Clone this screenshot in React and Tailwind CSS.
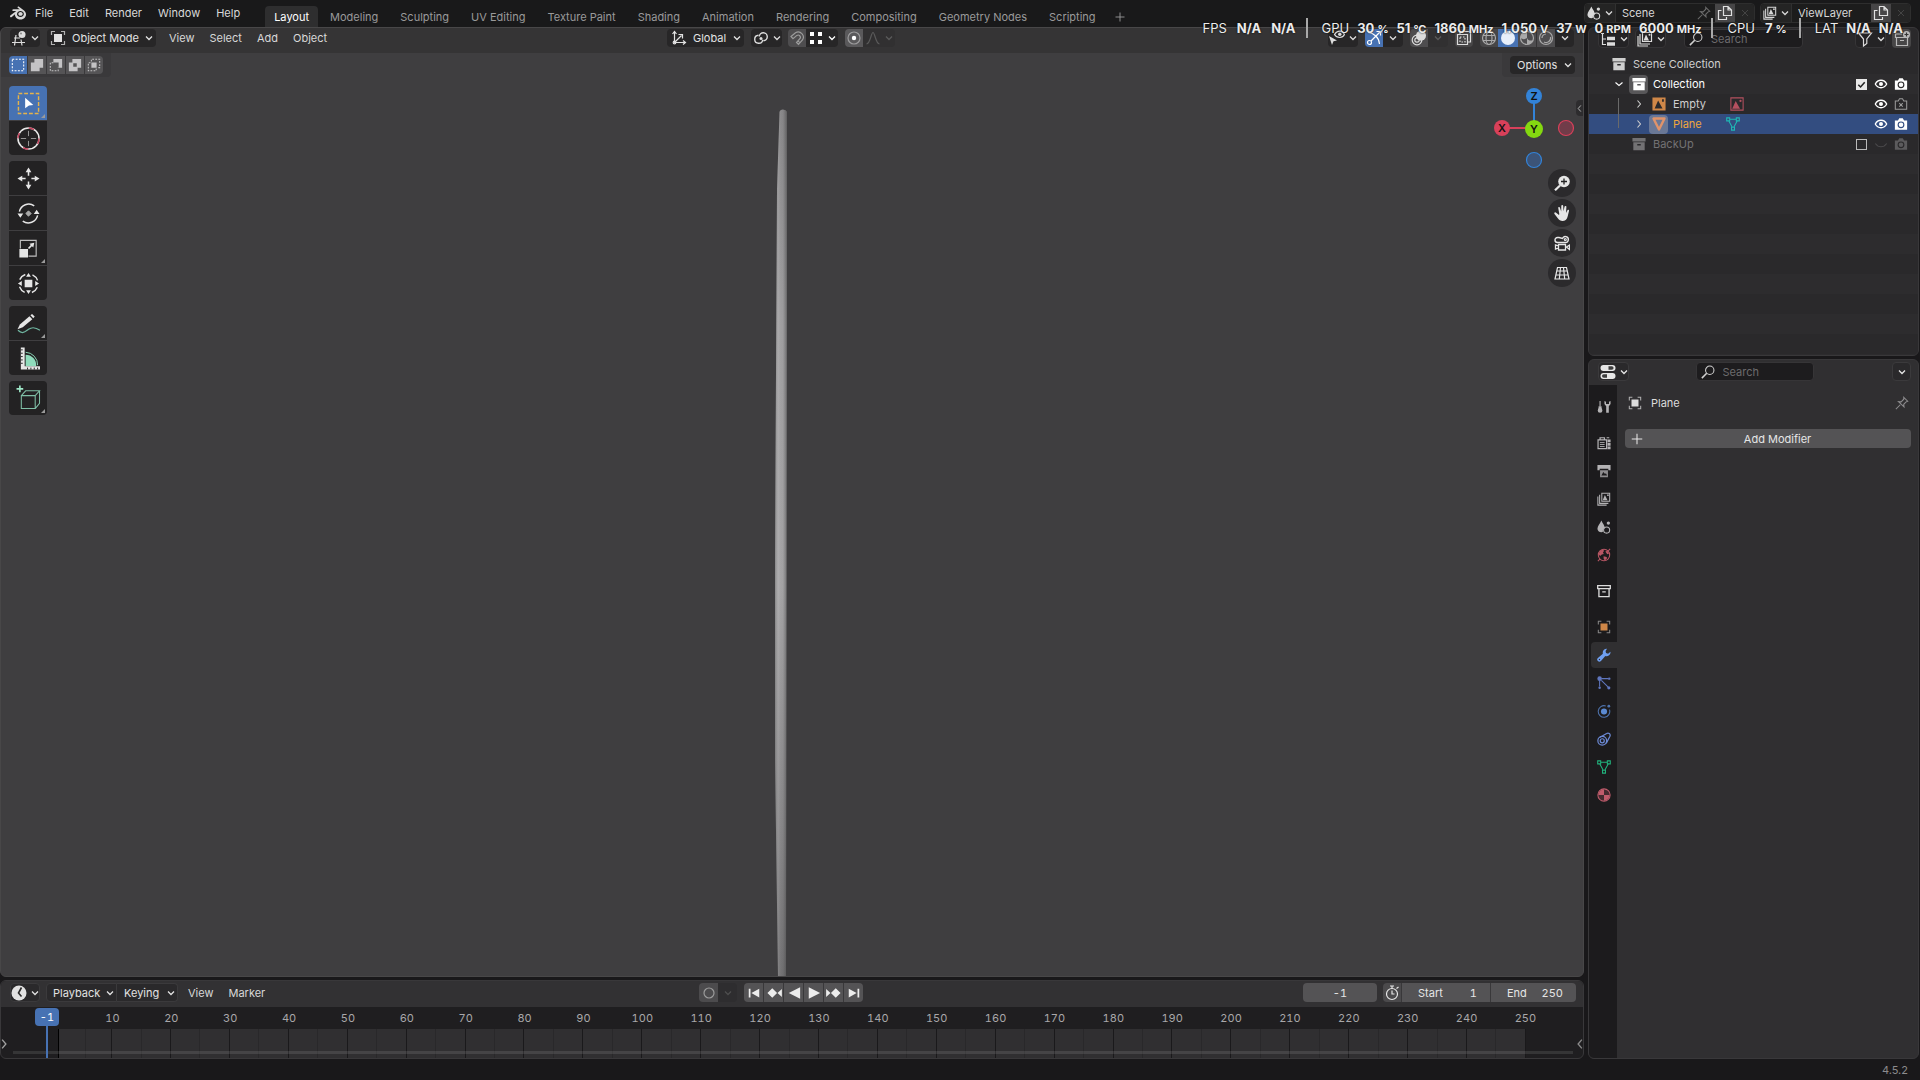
import React from "react";
import { SiBlender } from "react-icons/si";

/* ---------- icons ---------- */

function Icon({ children, className = "size-4", box = 16 }) {
  return (
    <svg
      viewBox={`0 0 ${box} ${box}`}
      className={`${className} shrink-0`}
      fill="none"
      stroke="currentColor"
      strokeWidth="1.2"
      aria-hidden="true"
    >
      {children}
    </svg>
  );
}

const Chevron = ({ className = "" }) => (
  <svg viewBox="0 0 8 8" className={`size-2 shrink-0 ${className}`} fill="none" stroke="currentColor" strokeWidth="1.3" aria-hidden="true">
    <path d="M1 2.500l3 3 3-3" />
  </svg>
);
const ChevronRight = ({ className = "size-2" }) => (
  <svg viewBox="0 0 8 8" className={`${className} shrink-0`} fill="none" stroke="currentColor" strokeWidth="1.1" aria-hidden="true">
    <path d="M2.500 0.500l3 3.500-3 3.500" />
  </svg>
);
const ChevronLeft = ({ className = "size-2" }) => (
  <svg viewBox="0 0 8 8" className={`${className} shrink-0`} fill="none" stroke="currentColor" strokeWidth="1.1" aria-hidden="true">
    <path d="M5.500 0.500l-3 3.500 3 3.500" />
  </svg>
);

const View3dIcon = () => (
  <Icon>
    <path d="M3 8h6M1 12.500h13M5 5L3.500 15.500M10 9.500l1 6" />
    <circle cx="11" cy="4.500" r="3.500" fill="currentColor" stroke="none" />
    <circle cx="10" cy="3.500" r="1" fill="#888" stroke="none" />
  </Icon>
);
const ObjectIcon = ({ className, fill = "currentColor" }) => (
  <Icon className={className}>
    <rect x="4" y="4" width="8" height="8" fill={fill} stroke="none" />
    <path d="M1.500 5V1.500H5M11 1.500h3.500V5M14.500 11v3.500H11M5 14.500H1.500V11" opacity=".75" />
  </Icon>
);
const AxesIcon = () => (
  <Icon>
    <path d="M3.500 2v10.500H14M3.500 12.500l7-7M1.500 4l2-2.500 2 2.500M12 10.500l2.500 2-2.500 2M7.500 4.500h4v4" />
    <circle cx="3.500" cy="12.500" r="1.300" />
  </Icon>
);
const PivotIcon = () => (
  <Icon>
    <circle cx="8" cy="8.500" r="1.500" fill="currentColor" stroke="none" />
    <path d="M6.300 6.500a4 4 0 1 1 4.200 4.300M9.700 9.700a4 4 0 1 1-4.200-4.400" strokeWidth="1.400" />
  </Icon>
);
const MagnetIcon = () => (
  <Icon>
    <path d="M2 6.500l4.500-3.800a5.200 5.200 0 0 1 7 7.300L9.500 14.500 7.500 12.500l3.600-4a2.300 2.300 0 0 0-3.200-3.100L4 8.700zM9 10.800l2 2" />
  </Icon>
);
const SnapDotsIcon = () => (
  <Icon>
    <path d="M2 2h4v4H2zM10 2h4v4h-4zM2 10h4v4H2zM10 10h4v4h-4z" fill="currentColor" stroke="none" />
  </Icon>
);
const ProportionalIcon = () => (
  <Icon>
    <circle cx="8" cy="8" r="6" opacity=".4" />
    <circle cx="8" cy="8" r="2.200" fill="currentColor" stroke="none" />
  </Icon>
);
const FalloffIcon = () => (
  <Icon>
    <path d="M1.500 14C5.500 13.500 6 2.500 8 2.500S10.500 13.500 14.500 14" />
  </Icon>
);
const VisibilityIcon = () => (
  <Icon>
    <path d="M5.500 4.500C7 2 9 1.200 10.800 1.200S14.500 2.500 15.500 4.500C14.500 6.500 12.600 7.500 10.800 7.500S7 7 5.500 4.500z" />
    <circle cx="10.800" cy="4.300" r="1.700" fill="currentColor" stroke="none" />
    <path d="M0 6l8 4.500-3.500.8L3 15z" fill="currentColor" stroke="none" />
  </Icon>
);
const GizmoIcon = () => (
  <Icon>
    <path d="M2 2.500c6 .5 11 5 11.500 11.500M5 11L14 2M10.500 1.500H14.500V5.500" />
    <circle cx="3.500" cy="12.500" r="2" />
  </Icon>
);
const OverlayIcon = () => (
  <Icon>
    <circle cx="10" cy="5.800" r="5" fill="currentColor" stroke="none" />
    <circle cx="6" cy="10" r="4.800" />
    <circle cx="6" cy="10" r="2.200" />
  </Icon>
);
const XrayIcon = () => (
  <Icon>
    <path d="M4 4V1.500h10.500V12H12" />
    <path d="M1.500 4.500h10v10h-10z" />
    <path d="M4 7h5v5H4z" strokeDasharray="1.500 1.500" />
  </Icon>
);
const WireIcon = () => (
  <Icon>
    <circle cx="8" cy="8" r="6.500" />
    <ellipse cx="8" cy="8" rx="3" ry="6.500" />
    <path d="M2 5.500h12M2 10.500h12" />
  </Icon>
);
const SolidIcon = () => (
  <Icon>
    <circle cx="8" cy="8" r="7" fill="currentColor" stroke="none" />
  </Icon>
);
const MatPreviewIcon = () => (
  <Icon>
    <circle cx="8" cy="8" r="6.500" />
    <path d="M8 8V1.500A6.500 6.500 0 0 0 1.500 8c2 1.500 4.500 1.500 6.500 0zM8 8c1 2.500 3.500 3 6 2.200A6.500 6.500 0 0 1 8 14.500z" fill="currentColor" stroke="none" />
  </Icon>
);
const RenderedIcon = () => (
  <Icon>
    <circle cx="8" cy="8" r="6.500" />
    <path d="M4 8a4 4 0 0 1 4-4M12.500 7A4.500 4.500 0 0 1 6 12" />
  </Icon>
);
const SceneIcon = ({ className }) => (
  <Icon className={className}>
    <path d="M5 0.500C6.500 4 9 6.500 9 9.500c-2 .5-2.500 2-2.300 4.300C3 14.500.500 12.500.500 10 .500 7 3.500 4 5 .5z" fill="currentColor" stroke="none" />
    <circle cx="11" cy="11.500" r="3.500" />
    <circle cx="13" cy="3.500" r="1.900" fill="currentColor" stroke="none" />
  </Icon>
);
const LayersIcon = ({ className }) => (
  <Icon className={className}>
    <path d="M1 5v10h10M3 3v10h10" />
    <path d="M5.500 1.500h9v9h-9z" />
    <path d="M6.500 9.500l2.500-6 3 6z" fill="currentColor" stroke="none" />
    <circle cx="12.500" cy="3.700" r="1" fill="currentColor" stroke="none" />
  </Icon>
);
const PinIcon = ({ className }) => (
  <Icon className={className}>
    <path d="M1 15l5-5M10 1.500l4.500 4.500-1.500.5-3 3 .3 3L4 6.500l3 .2 3-3z" />
  </Icon>
);
const CopyIcon = () => (
  <Icon>
    <path d="M6.500 1.500h4.500l3.500 3.500v5.500h-8zM11 1.500V5h3.500" />
    <path d="M4.500 5.500h-3v9h8v-2.500" />
  </Icon>
);
const CloseIcon = () => (
  <Icon className="size-3">
    <path d="M4 4l8 8M12 4l-8 8" />
  </Icon>
);
const OutlinerIcon = () => (
  <Icon>
    <path d="M1 2.500h3M2.500 2.500v11H6M2.500 8H6" />
    <path d="M7 5.800h8v3.400H7zM7 11.300h8v3.400H7z" fill="currentColor" stroke="none" />
  </Icon>
);
const SearchIcon = () => (
  <Icon className="size-3.5">
    <circle cx="10" cy="6" r="4.800" />
    <path d="M6.500 9.500L1 15" strokeWidth="1.800" />
  </Icon>
);
const FilterIcon = () => (
  <Icon>
    <path d="M1.500 2h13L9.800 8v4.500L6.500 15V8z" />
  </Icon>
);
const NewCollectionIcon = () => (
  <Icon>
    <path d="M8 3H1.500v3.500H14.500M2.500 6.500v8h11v-8M6 9.500h4" />
    <circle cx="12.500" cy="3.500" r="3.500" fill="currentColor" stroke="none" />
    <path d="M12.500 1.500v4M10.500 3.500h4" stroke="#333" />
  </Icon>
);
const CollectionIcon = ({ className = "size-4" }) => (
  <Icon className={className}>
    <path d="M0.500 1h15v4H.500z" fill="currentColor" stroke="none" />
    <path d="M1.500 6h13v9h-13zM6 8v1.700h4V8z" fill="currentColor" fillRule="evenodd" stroke="none" />
  </Icon>
);
const EyeIcon = () => (
  <Icon>
    <path d="M1.500 8C3 5 5.500 3.700 8 3.700S13 5 14.500 8C13 11 10.500 12.300 8 12.300S3 11 1.500 8z" strokeWidth="1.500" />
    <circle cx="8" cy="8" r="2.300" fill="currentColor" stroke="none" />
  </Icon>
);
const EyeClosedIcon = () => (
  <Icon>
    <path d="M1.500 7.500c3.500 5 9.500 5 13 0" />
  </Icon>
);
const CameraIcon = () => (
  <Icon>
    <path d="M1 4h3.500L6 1.500h4L11.500 4H15v10.500H1zM8 5a3.900 3.900 0 1 0 0 7.800A3.900 3.900 0 0 0 8 5z" fill="currentColor" fillRule="evenodd" stroke="none" />
    <circle cx="8" cy="8.900" r="2.600" fill="currentColor" stroke="none" />
  </Icon>
);
const CameraOffIcon = () => (
  <Icon>
    <path d="M1.500 4.500h3.300L6.300 2h3.400l1.500 2.500h3.300V14h-13zM6 7l4 4M10 7l-4 4" />
  </Icon>
);
const EmptyImageIcon = () => (
  <Icon>
    <path d="M0.500 0.500h15v15H.500zM3 13h9L7 4zM11.500 2.500v3h2v-3z" fill="#cf8748" fillRule="evenodd" stroke="none" />
  </Icon>
);
const ImageDataIcon = () => (
  <Icon>
    <path d="M1 1h14v14H1z" stroke="#b4505f" />
    <path d="M2.500 13.500L6.500 4.500l5 9z" fill="#b4505f" stroke="none" />
    <circle cx="12" cy="4.500" r="1.300" fill="#b4505f" stroke="none" />
  </Icon>
);
const MeshObjectIcon = () => (
  <Icon>
    <path d="M2.500 2.500h11L8 13.500z" stroke="#e0936a" strokeWidth="2.400" strokeLinejoin="round" />
  </Icon>
);
const MeshDataIcon = ({ className, color }) => (
  <Icon className={className}>
    <path d="M4.500 2.500h7M3.200 4.500L7 11.500M12.800 4.500L9 11.500M.800 1h3.400v3.400H.800zM11.800 1h3.400v3.400h-3.400zM6.300 11.600h3.400V15H6.300z" stroke={color} />
  </Icon>
);
const PropertiesIcon = () => (
  <Icon>
    <rect x="0.500" y="1" width="15" height="6" rx="3" fill="currentColor" stroke="none" />
    <rect x="0.500" y="9" width="15" height="6" rx="3" fill="currentColor" stroke="none" />
    <path d="M8.500 2.200h3.300a1.800 1.800 0 0 1 0 3.600H8.500zM3.800 10.200H7v3.600H3.800a1.800 1.800 0 0 1 0-3.600z" fill="#2a2a2a" stroke="none" opacity=".9" />
  </Icon>
);
const PlusIcon = ({ className = "size-3.5" }) => (
  <Icon className={className}>
    <path d="M8 2v12M2 8h12" />
  </Icon>
);
const ClockIcon = () => (
  <Icon>
    <circle cx="8" cy="8" r="7.500" fill="currentColor" stroke="none" />
    <path d="M10.500 2.500L7.500 8l3 3.500" stroke="#2a2a2a" strokeWidth="1.600" />
  </Icon>
);
const StopwatchIcon = () => (
  <Icon>
    <circle cx="8" cy="9" r="5.500" />
    <path d="M8 5.500V9h2.500M6 1h4M8 1v2.500M12.500 3.500L14.500 2" />
  </Icon>
);

/* property editor tabs */
const ToolTabIcon = () => (
  <Icon>
    <path d="M3.500 1v6" strokeWidth="1.300" />
    <path d="M1.800 7h3.400v1.500l1 3.500a2.700 2.700 0 0 1-5.400 0l1-3.500z" fill="currentColor" stroke="none" />
    <path d="M8.500 1v3.500l2 2.500v7.500h3V7l2-2.500V1l-1.800 1v2.500h-3.400V2z" fill="currentColor" stroke="none" />
  </Icon>
);
const RenderTabIcon = () => (
  <Icon>
    <path d="M1.200 4.500h9.800v10H1.200zM3.500 4V2h5v2" strokeWidth="1.400" />
    <path d="M3.300 7.500h5.400M3.300 9.700h5.400M3.300 12h5.400" strokeWidth="1" />
    <path d="M12 4h3.500v3H12zM12 8h3.500v3H12zM12 12h3.500v3H12z" fill="currentColor" stroke="none" />
    <path d="M11 2h3" />
  </Icon>
);
const OutputTabIcon = () => (
  <Icon>
    <path d="M.500 1h15v6h-2.500V5.500H3V7H.500z" fill="currentColor" stroke="none" />
    <path d="M3.500 7h9v8h-9z" fill="currentColor" stroke="none" opacity=".75" />
    <path d="M5 13l2.200-4 2 2.500 1-1L11.500 13z" fill="#1c1b1d" stroke="none" />
  </Icon>
);
const WorldTabIcon = () => (
  <Icon>
    <circle cx="8" cy="8" r="6.500" />
    <path d="M3.500 3.500l2.800-1.800 1.900 1.500-1.400 2 1 1.600-2.300.7L3.500 9 1.800 7zM9.500 4l2.500-.8 1.800 3-2 .8zM7.500 9.300l3.500.9.500 1.600-2.500 2.600-1.400-2z" fill="currentColor" stroke="none" />
    <path d="M1 15l2.500-2.500M15 1l-2.200 2.200" />
  </Icon>
);
const CollectionTabIcon = () => (
  <Icon>
    <path d="M.800 1.800h14.400v3.400H.800zM2.200 5.200h11.600v9.300H2.200zM6 9h4" strokeWidth="1.500" />
  </Icon>
);
const WrenchTabIcon = () => (
  <Icon>
    <path d="M11.500.800A4.600 4.600 0 0 0 6.700 6.500L1 11.300a2.400 2.400 0 0 0 3.500 3.500l5-5.600a4.600 4.600 0 0 0 5.900-5L12.700 6.500 10.300 5.800 9.800 3.400zM2.800 12.300a.8.8 0 1 1 0 1.600.8.8 0 0 1 0-1.600z" fill="currentColor" fillRule="evenodd" stroke="none" />
  </Icon>
);
const ParticlesTabIcon = () => (
  <Icon>
    <circle cx="3" cy="3" r="2.600" fill="currentColor" stroke="none" />
    <path d="M5 3h8M3 5v7M5 5l7.500 7.500" />
    <circle cx="14" cy="3" r="1.400" fill="currentColor" stroke="none" />
    <circle cx="3" cy="13.500" r="1.400" fill="currentColor" stroke="none" />
    <circle cx="13.500" cy="13.500" r="1.800" fill="currentColor" stroke="none" />
  </Icon>
);
const PhysicsTabIcon = () => (
  <Icon>
    <circle cx="8" cy="8.500" r="3.500" fill="currentColor" stroke="none" />
    <path d="M10 2.200A6.600 6.600 0 1 0 14.300 6.500" opacity=".8" />
    <circle cx="13.500" cy="2.500" r="1.600" fill="currentColor" stroke="none" opacity=".8" />
  </Icon>
);
const ConstraintsTabIcon = () => (
  <Icon>
    <path d="M3 6.200L11 1.800a2.500 2.500 0 0 1 3.800 3L10.500 13" strokeWidth="1.400" />
    <circle cx="6" cy="10" r="5" strokeWidth="1.400" />
    <circle cx="6" cy="10" r="2.300" strokeWidth="1.400" />
  </Icon>
);
const MaterialTabIcon = () => (
  <Icon>
    <circle cx="8" cy="8" r="7" />
    <path d="M8 8H1.500A6.500 6.500 0 0 0 8 14.500zM8 8h6.500A6.500 6.500 0 0 0 8 1.500z" fill="currentColor" stroke="none" opacity=".25" />
    <path d="M8 8H1.500A6.500 6.500 0 0 1 8 1.500zM8 8h6.500A6.500 6.500 0 0 1 8 14.500z" fill="currentColor" stroke="none" />
  </Icon>
);

/* ---------- shared controls ---------- */

const iconMenu = "flex h-[18px] items-center justify-center gap-1 rounded bg-[#272627] text-[#dcdcdc]";

function MenuItem({ children }) {
  return <button className="h-[18px] text-[#d8d8d8]">{children}</button>;
}

/* ---------- top bar ---------- */

const MENUS = ["File", "Edit", "Render", "Window", "Help"];
const WORKSPACES = ["Layout", "Modeling", "Sculpting", "UV Editing", "Texture Paint", "Shading", "Animation", "Rendering", "Compositing", "Geometry Nodes", "Scripting"];

function DataBlock({ icon, name, width, pin }) {
  return (
    <div className={`flex h-5 ${width} overflow-hidden rounded border border-[#2e2e2e] bg-[#1c1c1c] text-[#d8d8d8]`}>
      <button className="flex w-[31px] shrink-0 items-center justify-center gap-1 border-r border-[#303030] bg-[#242424]" aria-label={`Browse ${name}`}>
        {icon}
        <Chevron />
      </button>
      <input aria-label={`${name} name`} defaultValue={name} className="w-0 min-w-0 flex-1 bg-transparent pl-1.5 outline-none" />
      {pin && <button aria-label="Pin scene" className="mr-1 text-[#6c6c6c]"><PinIcon className="size-3.5" /></button>}
      <button aria-label={`New ${name}`} className="flex w-5 items-center justify-center bg-[#474647] text-[#e0e0e0]"><CopyIcon /></button>
      <button aria-label={`Remove ${name}`} className="flex w-[19px] items-center justify-center bg-[#252525] text-[#484848]"><CloseIcon /></button>
    </div>
  );
}

function TopBar() {
  return (
    <header className="flex h-[27px] shrink-0 items-start bg-[#19191a]">
      <nav className="flex h-[26px] items-center gap-4 pl-2.5 text-[#d8d8d8]" aria-label="Main menu">
        <button aria-label="Blender" className="-mr-[7px]"><SiBlender className="size-4" /></button>
        {MENUS.map((m) => <button key={m}>{m}</button>)}
      </nav>
      <div className="ml-[25px] flex h-[27px] items-end gap-0.5 text-[#9a9a9a]" role="tablist" aria-label="Workspaces">
        {WORKSPACES.map((w, i) => (
          <button
            key={w}
            role="tab"
            aria-selected={i === 0}
            className={i === 0 ? "h-[21px] rounded-t bg-[#2e2e2f] px-[9px] text-white" : "h-[21px] px-2.5"}
          >
            {w}
          </button>
        ))}
        <button aria-label="Add workspace" className="flex h-[21px] items-center pl-1.5"><PlusIcon className="size-3" /></button>
      </div>
      <div className="ml-auto flex gap-[5px] pt-[3px] pr-[9px]">
        <DataBlock icon={<SceneIcon className="size-3.5" />} name="Scene" width="w-[171px]" pin />
        <DataBlock icon={<LayersIcon className="size-3.5" />} name="ViewLayer" width="w-[151px]" />
      </div>
    </header>
  );
}

/* ---------- performance overlay ---------- */

function Stat({ value, unit }) {
  return (
    <span className="font-bold">
      {value}
      {unit && <span className="ml-[3px] text-[11px]">{unit}</span>}
    </span>
  );
}
const StatRule = () => <span className="h-5 w-0.5 bg-[#a9a9a9]" />;

function PerformanceOverlay() {
  return (
    <div className="pointer-events-none absolute top-4 right-[17px] z-20 flex h-6 items-center text-[13px] whitespace-nowrap text-[#ececec] [text-shadow:0_0_2px_#000]">
      <div className="flex items-center gap-2.5">
        <span>FPS</span><Stat value="N/A" /><Stat value="N/A" />
      </div>
      <div className="ml-2.5 flex items-center"><StatRule /></div>
      <div className="ml-3.5 flex items-center gap-2">
        <span>GPU</span>
        <Stat value="30" unit="%" />
        <Stat value="51" unit="°C" />
        <Stat value="1860" unit="MHz" />
        <Stat value="1.050" unit="V" />
        <Stat value="37" unit="W" />
        <Stat value="0" unit="RPM" />
        <Stat value="6000" unit="MHz" />
      </div>
      <div className="ml-2.5 flex items-center"><StatRule /></div>
      <div className="ml-3.5 flex items-center gap-2.5"><span>CPU</span><Stat value="7" unit="%" /></div>
      <div className="ml-3 flex items-center"><StatRule /></div>
      <div className="ml-3.5 flex items-center gap-2">
        <span>LAT</span><Stat value="N/A" /><Stat value="N/A" />
      </div>
    </div>
  );
}

/* ---------- viewport ---------- */

const SELECT_MODES = [
  { label: "Set", on: true, art: <path d="M1.500 1.500h13v13h-13z" strokeDasharray="2.200 1.600" /> },
  { label: "Extend", art: <path d="M5 1h10v10h-4v4H1V5h4z" fill="currentColor" stroke="none" /> },
  { label: "Subtract", art: <><path d="M5 1h10v10h-4V5H5z" fill="currentColor" stroke="none" /><path d="M5 5.500H1.500v9h9V11" strokeDasharray="2 1.500" /></> },
  { label: "Difference", art: <path d="M5 1h10v10h-4v4H1V5h4zM6 6v4h4V6z" fill="currentColor" fillRule="evenodd" stroke="none" /> },
  { label: "Intersect", art: <><path d="M5 5h6v6H5z" fill="currentColor" stroke="none" /><path d="M5 4V1.500h9.500V11H12M4 5.500H1.500v9h9V12" strokeDasharray="2 1.500" /></> },
];

function ViewportHeader() {
  return (
    <div className="grid h-[25px] grid-cols-[1fr_auto_1fr] items-start bg-[#353435] pt-px pr-[9px] pl-[9px]">
      <div className="flex items-center">
        <button className={`${iconMenu} w-[30px]`} aria-label="Editor type: 3D Viewport"><View3dIcon /><Chevron /></button>
        <label className="ml-[7px] flex h-[18px] w-[109px] items-center rounded bg-[#272627] pr-[3px] pl-[3px] text-[#e2e2e2]">
          <ObjectIcon />
          <select aria-label="Mode" className="min-w-0 flex-1 appearance-none bg-transparent pl-1.5 outline-none"><option>Object Mode</option></select>
          <Chevron />
        </label>
        <div className="ml-[13px] flex gap-[15px]">
          {["View", "Select", "Add", "Object"].map((m) => <MenuItem key={m}>{m}</MenuItem>)}
        </div>
      </div>
      <div className="mr-[22px] flex items-center">
        <label className="flex h-[18px] w-[77px] items-center rounded bg-[#272627] pr-[3px] pl-1 text-[#e2e2e2]">
          <AxesIcon />
          <select aria-label="Transform orientation" className="min-w-0 flex-1 appearance-none bg-transparent pl-1.5 outline-none"><option>Global</option></select>
          <Chevron />
        </label>
        <button className={`${iconMenu} ml-[7px] w-[31px]`} aria-label="Pivot point"><PivotIcon /><Chevron /></button>
        <button className="ml-1.5 flex h-[18px] w-[18px] items-center justify-center rounded-l bg-[#4e4d4f] text-[#9b9b9b]" aria-label="Snap"><MagnetIcon /></button>
        <button className="flex h-[18px] w-8 items-center justify-center gap-1 rounded-r bg-[#272627] text-white" aria-label="Snapping"><SnapDotsIcon /><Chevron /></button>
        <button className="ml-[7px] flex h-[18px] w-[18px] items-center justify-center rounded-l bg-[#5a595b] text-white" aria-label="Proportional editing"><ProportionalIcon /></button>
        <button className="flex h-[18px] w-8 items-center justify-center gap-1 rounded-r bg-[#313031] text-[#5a5a5a]" aria-label="Proportional falloff"><FalloffIcon /><Chevron /></button>
      </div>
      <div className="flex items-center justify-end text-[#dcdcdc]">
        <button className={`${iconMenu} w-[30px]`} aria-label="Object visibility"><VisibilityIcon /><Chevron /></button>
        <button className="ml-[7px] flex h-[18px] w-[18px] items-center justify-center rounded-l bg-[#4772b3] text-white" aria-label="Gizmos"><GizmoIcon /></button>
        <button className="flex h-[18px] w-5 items-center justify-center rounded-r bg-[#272627]" aria-label="Gizmo options"><Chevron /></button>
        <button className="ml-[7px] flex h-[18px] w-[18px] items-center justify-center rounded-l bg-[#4e4d4f]" aria-label="Overlays"><OverlayIcon /></button>
        <button className="flex h-[18px] w-5 items-center justify-center rounded-r bg-[#313031] text-[#5a5a5a]" aria-label="Overlay options"><Chevron /></button>
        <button className="ml-[7px] flex h-[18px] w-[18px] items-center justify-center rounded bg-[#474647]" aria-label="X-ray"><XrayIcon /></button>
        <div className="ml-[7px] flex overflow-hidden rounded">
          <button className="flex h-[18px] w-[18px] items-center justify-center bg-[#474647] text-[#a9a9a9]" aria-label="Wireframe shading"><WireIcon /></button>
          <button className="flex h-[18px] w-5 items-center justify-center bg-[#4772b3] text-[#e8effa]" aria-label="Solid shading"><SolidIcon /></button>
          <button className="flex h-[18px] w-[18px] items-center justify-center bg-[#4e4d4f] text-[#a9a9a9]" aria-label="Material preview"><MatPreviewIcon /></button>
          <button className="ml-px flex h-[18px] w-[18px] items-center justify-center bg-[#4e4d4f] text-[#a9a9a9]" aria-label="Rendered shading"><RenderedIcon /></button>
          <button className="flex h-[18px] w-[19px] items-center justify-center bg-[#272627]" aria-label="Shading options"><Chevron /></button>
        </div>
      </div>
    </div>
  );
}

const CornerMark = () => (
  <span className="absolute right-0.5 bottom-0.5 size-1 bg-[#9a9a9a] [clip-path:polygon(100%_0,100%_100%,0_100%)]" />
);

const TOOL_GROUPS = [
  [
    { label: "Select Box", on: true, more: true, art: <><path d="M1.500 1.500h21v21h-21z" stroke="#e5b34a" strokeDasharray="4 2" strokeWidth="1.500" /><path d="M8.500 6l8.500 7.500-4.500.5-4 3z" fill="#fff" stroke="none" /></> },
    { label: "Cursor", art: <><circle cx="12" cy="12" r="11" stroke="#e8e8e8" strokeWidth="1.600" /><circle cx="12" cy="12" r="11" stroke="#c2405a" strokeWidth="1.600" strokeDasharray="5.760 11.520" /><path d="M12 4v5.500M12 14.500V20M4 12h5.500M14.500 12H20" stroke="#9a9a9a" strokeWidth="1" /></> },
  ],
  [
    { label: "Move", art: <><path d="M12 4v5M12 15v5M4 12h5M15 12h5" strokeWidth="1.600" /><path d="M12 .500l3 5H9zM12 23.500l3-5H9zM.500 12l5-3v6zM23.500 12l-5-3v6z" fill="currentColor" stroke="none" /></> },
    { label: "Rotate", art: <><path d="M2.500 10A10 10 0 0 1 18 4M21.500 14A10 10 0 0 1 6 20" strokeWidth="1.500" /><path d="M.500 12h6l-3 4.500zM17.500 12.500h6l-3-4.500z" fill="currentColor" stroke="none" /><path d="M12 9.200l2.800 2.800-2.800 2.800L9.200 12z" fill="#a9a9a9" stroke="#a9a9a9" /></> },
    { label: "Scale", more: true, art: <><path d="M3.500 12V3.500h16.500V20H12" strokeWidth="1.200" opacity=".8" /><path d="M2.500 12.500h9v9h-9z" fill="currentColor" stroke="none" /><path d="M12 12l4-4" strokeWidth="1.800" /><path d="M18 6l-1 5-4-4z" fill="currentColor" stroke="none" /></> },
    { label: "Transform", art: <><circle cx="12" cy="12" r="10" strokeDasharray="8 7.700" strokeDashoffset="-4" strokeWidth="1.500" /><path d="M8 8h8v8H8z" fill="currentColor" stroke="none" /><path d="M12 1l2.500 4h-5zM12 23l2.500-4h-5zM1 12l4-2.500v5zM23 12l-4-2.500v5z" fill="currentColor" stroke="none" /></> },
  ],
  [
    { label: "Annotate", more: true, art: <><path d="M1 19c5 5 8 1 11-1s6-3 12 1" stroke="#6fb5a0" strokeWidth="1.300" /><path d="M.500 18l2.500-5L13 4.500l3 3L6 16z" fill="currentColor" stroke="none" /><path d="M14 3.500L15.700 2l2.800 2.800L17 6.500z" fill="currentColor" stroke="none" /></> },
    { label: "Measure", art: <><path d="M9 8a11 11 0 0 1 11 12H9z" fill="#8fdcbc" stroke="none" /><path d="M9 5.500A13 13 0 0 1 21.500 19" stroke="#8fdcbc" strokeWidth="1" /><path d="M4 .500h4v23H4zM4 20h20v3.500H4z" fill="currentColor" stroke="none" /><path d="M4 3h2M4 6.500h2M4 10h2M4 13.500h2M4 17h2M11 23.500v-2M14.500 23.500v-2M18 23.500v-2M21.500 23.500v-2" stroke="#222" /></> },
  ],
  [
    { label: "Add Cube", more: true, art: <><path d="M4.500 9H19v13.500H4.500zM4.500 9l4.500-5h14.500L19 9M23.500 4v13L19 22.500" stroke="#7fbfa6" strokeWidth="1.100" /><path d="M3-1.500v7M-.500 2h7" stroke="#9fe8c8" strokeWidth="1.700" /></> },
  ],
];

function Toolbar() {
  return (
    <div className="flex w-[38px] flex-col gap-1.5" role="toolbar" aria-label="Tools">
      {TOOL_GROUPS.map((group, i) => (
        <div key={i} className="flex flex-col gap-px overflow-hidden rounded">
          {group.map((tool) => (
            <button
              key={tool.label}
              aria-label={tool.label}
              className={`relative flex h-[34px] items-center justify-center text-[#e6e6e6] ${tool.on ? "bg-[#4772b3]" : "bg-[#232223]"}`}
            >
              <svg viewBox="0 0 24 24" className="size-[23px] overflow-visible" fill="none" stroke="currentColor" aria-hidden="true">{tool.art}</svg>
              {tool.more && <CornerMark />}
            </button>
          ))}
        </div>
      ))}
    </div>
  );
}

function NavigationGizmo() {
  return (
    <svg viewBox="0 0 84 82" className="mt-px h-[82px] w-[84px]" aria-label="View axes" role="img">
      <g strokeWidth="2">
        <path d="M42 42V14" stroke="#3383d8" />
        <path d="M42 41H14" stroke="#d8405a" />
      </g>
      <circle cx="42" cy="73" r="7.500" fill="#3c5478" stroke="#3383d8" strokeWidth="1.200" />
      <circle cx="74" cy="41" r="7.500" fill="#713c49" stroke="#d8405a" strokeWidth="1.200" />
      <circle cx="42" cy="9" r="8" fill="#3383d8" />
      <circle cx="10" cy="41" r="8" fill="#d8405a" />
      <circle cx="42" cy="42" r="9" fill="#84d810" />
      <g fill="#111" fontFamily="Inter, sans-serif" fontSize="11" fontWeight="600" textAnchor="middle">
        <text x="42" y="13">Z</text>
        <text x="10" y="45">X</text>
        <text x="42" y="46">Y</text>
      </g>
    </svg>
  );
}

const NAV_BUTTONS = [
  { label: "Zoom", art: <><circle cx="10" cy="6.500" r="5.800" fill="currentColor" stroke="none" /><path d="M6 10.500L1 15.300" strokeWidth="2.200" /><path d="M10 3.500v6M7 6.500h6" stroke="#222" strokeWidth="1.300" /></> },
  { label: "Pan", art: <path d="M5.300 9L4.200 2.800a.9.9 0 0 1 1.700-.4l1.300 4L7.300 1a.95.95 0 0 1 1.900 0l.3 5.300 1-4.600a.95.95 0 0 1 1.900.3L12 8l1.300-2.600a.9.9 0 0 1 1.700.6l-1.500 6c-.7 2.500-2.500 4-5 4-2 0-3.500-1-4.500-2.500L.500 9a1 1 0 0 1 1.600-1.200L5 10z" fill="currentColor" stroke="none" /> },
  { label: "Camera view", art: <><path d="M3.500 2.500A2.500 2.500 0 1 0 3.500 7.500H11A3 3 0 1 0 8.500 3.500L5 2.500z" strokeWidth="1.400" /><circle cx="11.300" cy="4.500" r="1" /><path d="M4.500 9.500h7v5.500h-7zM4.500 11L1.500 10v4l3-1M12.500 12l3-2v4.500z" strokeWidth="1.300" /></> },
  { label: "Orthographic", art: <path d="M3.500 2.500h9l2.500 11.500H1zM2.700 6h10.600M1.800 10h12.400M6.500 2.500L5.300 14M9.500 2.500L10.700 14" /> },
];

function Blade() {
  return (
    <svg viewBox="0 0 16 868" preserveAspectRatio="none" className="absolute top-[81px] bottom-0 left-1/2 -ml-[19px] h-[868px] w-4" aria-hidden="true">
      <defs>
        <linearGradient id="bladeLength" x1="0" y1="0" x2="0" y2="1">
          <stop offset="0" stopColor="#8a898b" />
          <stop offset=".25" stopColor="#a3a2a4" />
          <stop offset=".55" stopColor="#a8a7a9" />
          <stop offset=".85" stopColor="#868587" />
          <stop offset="1" stopColor="#727173" />
        </linearGradient>
        <linearGradient id="bladeEdge" x1="0" y1="0" x2="1" y2="0">
          <stop offset="0" stopColor="#555" stopOpacity=".4" />
          <stop offset=".3" stopColor="#ccc" stopOpacity=".15" />
          <stop offset=".65" stopColor="#444" stopOpacity=".05" />
          <stop offset="1" stopColor="#333" stopOpacity=".5" />
        </linearGradient>
      </defs>
      <path d="M6.500 3Q7 .500 10 .500T14 3L14 80 13.500 400 13 868H5L2 650 2 450 4 80z" fill="url(#bladeLength)" />
      <path d="M6.500 3Q7 .500 10 .500T14 3L14 80 13.500 400 13 868H5L2 650 2 450 4 80z" fill="url(#bladeEdge)" />
    </svg>
  );
}

function Viewport() {
  return (
    <section aria-label="3D Viewport" className="relative flex min-h-0 flex-1 flex-col overflow-hidden rounded-md border border-[#484748] bg-[#3f3e40]">
      <Blade />
      <ViewportHeader />
      <div className="relative flex h-[26px] items-start justify-between">
        <div className="flex h-6 items-start rounded-br bg-[#3a393b] pt-[3px] pr-2 pl-2">
          <div className="flex gap-px overflow-hidden rounded">
            {SELECT_MODES.map((m) => (
              <button key={m.label} aria-label={`Select mode ${m.label}`} className={`flex size-[18px] items-center justify-center ${m.on ? "bg-[#4772b3] text-white" : "bg-[#555456] text-[#c4c3c5]"}`}>
                <Icon className="size-3.5">{m.art}</Icon>
              </button>
            ))}
          </div>
        </div>
        <div className="flex h-6 items-start rounded-bl bg-[#3a393b] pt-[3px] pr-2 pl-2">
          <button className="flex h-[18px] w-[65px] items-center justify-between rounded bg-[#272627] pr-[3px] pl-[7px] text-[#e2e2e2]">Options<Chevron /></button>
        </div>
      </div>
      <div className="relative flex min-h-0 flex-1 justify-between pt-[7px] pl-2">
        <Toolbar />
        <div className="flex flex-col items-end">
          <div className="flex items-start">
            <NavigationGizmo />
            <button aria-label="Show sidebar" className="mt-3.5 flex h-4 w-[7px] items-center rounded-l bg-[#2d2c2e] text-[#b9b9b9]"><ChevronLeft className="size-[7px]" /></button>
          </div>
          <div className="mr-[7px] flex flex-col gap-0.5">
            {NAV_BUTTONS.map((b) => (
              <button key={b.label} aria-label={b.label} className="flex size-7 items-center justify-center rounded-full bg-[#2b2a2c] text-[#e6e6e6]">
                <Icon>{b.art}</Icon>
              </button>
            ))}
          </div>
        </div>
      </div>
    </section>
  );
}

/* ---------- timeline ---------- */

const TRANSPORT = [
  { label: "Jump to start", d: "M2 3h2v10H2zM14 3v10L5 8z" },
  { label: "Previous keyframe", d: "M6 2.500L11.500 8 6 13.500.500 8zM17 3.500v9L12 8z" },
  { label: "Play reverse", d: "M15 1.500v13L2 8z" },
  { label: "Play", d: "M2 1.500v13L15 8z" },
  { label: "Next keyframe", d: "M10 2.500L15.500 8 10 13.500 4.500 8zM-1 3.500v9L4 8z" },
  { label: "Jump to end", d: "M12 3h2v10h-2zM2 3v10l9-5z" },
];
const FRAMES = Array.from({ length: 25 }, (_, i) => (i + 1) * 10);

function Timeline() {
  return (
    <section aria-label="Timeline" className="relative flex h-[79px] shrink-0 flex-col overflow-hidden rounded-md border border-[#39383a] bg-[#1f1e20]">
      <div className="grid h-[26px] shrink-0 grid-cols-[1fr_auto_1fr] items-start bg-[#323133] pt-0.5 pr-[7px] pl-[9px]">
        <div className="flex items-center text-[#e2e2e2]">
          <button className="flex h-[19px] w-[30px] items-center justify-center gap-1 rounded border border-[#3b3a3c] bg-[#2a292b]" aria-label="Editor type: Timeline"><ClockIcon /><Chevron /></button>
          <button className="ml-1.5 flex h-[19px] w-[71px] items-center justify-between rounded-l border border-[#3b3a3c] bg-[#2a292b] pr-0.5 pl-1.5">Playback<Chevron /></button>
          <button className="flex h-[19px] w-[61px] items-center justify-between rounded-r border border-l-0 border-[#3b3a3c] bg-[#2a292b] pr-0.5 pl-[7px]">Keying<Chevron /></button>
          <div className="ml-2.5 flex gap-[15px]"><MenuItem>View</MenuItem><MenuItem>Marker</MenuItem></div>
        </div>
        <div className="mr-6 flex items-center">
          <button className="flex h-[19px] w-[19px] items-center justify-center rounded-l bg-[#4c4b4d] text-[#9b9b9b]" aria-label="Auto keying"><Icon><circle cx="8" cy="8" r="5" /></Icon></button>
          <button className="mr-[7px] flex h-[19px] w-[19px] items-center justify-center rounded-r bg-[#2e2d2f] text-[#4e4e4e]" aria-label="Auto keying options"><Chevron /></button>
          <div className="flex gap-px overflow-hidden rounded bg-[#39383a]">
            {TRANSPORT.map((t) => (
              <button key={t.label} aria-label={t.label} className="flex h-[19px] w-[19px] items-center justify-center bg-[#545355] text-[#ececec]">
                <svg viewBox="-1 0 18 16" className="h-3.5 w-4" fill="currentColor" aria-hidden="true"><path d={t.d} /></svg>
              </button>
            ))}
          </div>
        </div>
        <div className="flex items-center justify-end text-[#e6e6e6] tabular-nums">
          <input aria-label="Current frame" defaultValue="-1" className="h-[19px] w-[74px] rounded bg-[#545355] text-center outline-none" />
          <button aria-label="Use preview range" className="ml-1.5 flex h-[19px] w-[19px] items-center justify-center rounded-l border-r border-[#39383a] bg-[#4b4a4c]"><StopwatchIcon /></button>
          <label className="flex h-[19px] w-[89px] items-center border-r border-[#39383a] bg-[#545355] pr-[13px] pl-4">Start<input defaultValue="1" className="w-0 min-w-0 flex-1 bg-transparent text-right outline-none" /></label>
          <label className="flex h-[19px] w-[85px] items-center rounded-r bg-[#545355] pr-[13px] pl-4">End<input defaultValue="250" className="w-0 min-w-0 flex-1 bg-transparent text-right outline-none" /></label>
        </div>
      </div>
      <div className="flex h-[22px] shrink-0 items-center pr-7 pl-[82px] text-[#a9a8aa] tabular-nums">
        {FRAMES.map((f) => <span key={f} className="min-w-0 flex-1 text-center">{f}</span>)}
      </div>
      <div className="flex min-h-0 flex-1">
        <div className="flex w-[58px] shrink-0 items-center border-r border-black text-[#a0a0a0]"><ChevronRight className="-ml-0.5 size-2.5" /></div>
        <div className="flex min-w-0 flex-1 bg-[#302f31]">
          {FRAMES.map((f) => (
            <div key={f} className={`flex min-w-0 border-r border-[#1a191b] ${f === 10 ? "grow-[9]" : "grow-[10]"} basis-0`}>
              <div className="flex-1 border-r border-[#29282a]" />
              <div className="flex-1" />
            </div>
          ))}
        </div>
        <div className="flex w-[57px] shrink-0 items-center justify-end text-[#8a8a8a]"><ChevronLeft className="-mr-0.5 size-2.5" /></div>
      </div>
      <div className="absolute right-2.5 bottom-1 left-3 h-[3px] bg-white/10" />
      <div className="absolute bottom-0 left-[34px] flex h-[50px] w-6 flex-col items-center text-white">
        <span className="flex h-[18px] w-6 items-center justify-center rounded bg-[#4772b3] tabular-nums">-1</span>
        <span className="w-0.5 flex-1 bg-[#4772b3]" />
      </div>
    </section>
  );
}

/* ---------- outliner ---------- */

function SearchField({ id, className }) {
  return (
    <label htmlFor={id} className={`flex h-[19px] items-center gap-2 rounded border border-[#363537] bg-[#1d1c1e] px-1 text-[#d0d0d0] ${className}`}>
      <SearchIcon />
      <input id={id} type="search" aria-label="Search" placeholder="Search" className="w-0 min-w-0 flex-1 bg-transparent placeholder-[#6c6b6d] outline-none" />
    </label>
  );
}

const CheckBox = ({ checked, label }) => (
  <span className="grid size-4 place-items-center">
    <input type="checkbox" defaultChecked={checked} aria-label={label} className="peer col-start-1 row-start-1 size-[11px] appearance-none border border-[#b9b9b9] checked:border-[#e8e8e8] checked:bg-[#e8e8e8]" />
    <svg viewBox="0 0 12 12" className="pointer-events-none col-start-1 row-start-1 hidden size-[11px] peer-checked:block" fill="none" stroke="#222" strokeWidth="1.700" aria-hidden="true"><path d="M2.500 6.200L5 8.700l4.500-5.200" /></svg>
  </span>
);

function OutlinerRow({ className = "", children, toggles }) {
  return (
    <li className={`flex h-5 items-center pr-[9px] ${className}`}>
      {children}
      <span className="ml-auto flex items-center gap-1">{toggles}</span>
    </li>
  );
}

const Toggle = ({ label, children, className = "" }) => (
  <button aria-label={label} className={`flex size-4 items-center justify-center [&>svg]:size-3.5 ${className}`}>{children}</button>
);

function Outliner() {
  return (
    <section aria-label="Outliner" className="flex h-[329px] shrink-0 flex-col overflow-hidden rounded-md border border-[#39383a] bg-[#2a292b]">
      <div className="flex h-[26px] shrink-0 items-start justify-between pt-px pr-[7px] pl-[9px]">
        <div className="flex gap-1.5 text-[#dcdcdc]">
          <button className="flex h-[19px] w-[31px] items-center justify-center gap-1 rounded border border-[#363537] bg-[#242325]" aria-label="Editor type: Outliner"><OutlinerIcon /><Chevron /></button>
          <button className="flex h-[19px] w-[31px] items-center justify-center gap-1 rounded border border-[#363537] bg-[#242325]" aria-label="Display mode"><LayersIcon /><Chevron /></button>
        </div>
        <SearchField id="outliner-search" className="mr-[34px] ml-0 w-[119px]" />
        <div className="flex gap-1.5 text-[#dcdcdc]">
          <button className="flex h-[19px] w-[31px] items-center justify-center gap-1 rounded border border-[#363537] bg-[#242325]" aria-label="Filter"><FilterIcon /><Chevron /></button>
          <button className="flex h-[19px] w-[19px] items-center justify-center rounded bg-[#474647] text-[#b9b9b9]" aria-label="New collection"><NewCollectionIcon /></button>
        </div>
      </div>
      <ul className="relative flex-1 bg-[repeating-linear-gradient(#2a292b_0_20px,#2d2c2e_20px_40px)] text-[#cfcfcf]">
        <li aria-hidden="true" className="absolute top-11 left-[29px] h-[30px] w-px bg-[#6a6a6a]" />
        <OutlinerRow className="pl-[23px]">
          <CollectionIcon className="size-3.5" /><span className="ml-[7px]">Scene Collection</span>
        </OutlinerRow>
        <OutlinerRow
          className="pl-[26px] text-white"
          toggles={<><CheckBox checked label="Include Collection" /><Toggle label="Hide Collection"><EyeIcon /></Toggle><Toggle label="Disable Collection in renders"><CameraIcon /></Toggle></>}
        >
          <button aria-label="Collapse Collection"><ChevronRight className="size-2 rotate-90" /></button>
          <span className="ml-1.5 flex size-[19px] items-center justify-center rounded bg-[#585759]"><CollectionIcon className="size-3.5" /></span>
          <span className="ml-[5px]">Collection</span>
        </OutlinerRow>
        <OutlinerRow
          className="pl-[46px]"
          toggles={<><Toggle label="Hide Empty" className="text-white"><EyeIcon /></Toggle><Toggle label="Disable Empty in renders" className="text-[#9a9a9a]"><CameraOffIcon /></Toggle></>}
        >
          <button aria-label="Expand Empty"><ChevronRight /></button>
          <span className="ml-[9px] flex [&>svg]:size-3.5"><EmptyImageIcon /></span>
          <span className="ml-[7px]">Empty</span>
          <span className="ml-6 flex [&>svg]:size-3.5"><ImageDataIcon /></span>
        </OutlinerRow>
        <OutlinerRow
          className="bg-[#334d80] pl-[46px]"
          toggles={<><Toggle label="Hide Plane" className="text-white"><EyeIcon /></Toggle><Toggle label="Disable Plane in renders" className="text-white"><CameraIcon /></Toggle></>}
        >
          <button aria-label="Expand Plane"><ChevronRight /></button>
          <span className="ml-1.5 flex size-[19px] items-center justify-center rounded bg-[#6a7896]"><MeshObjectIcon /></span>
          <span className="ml-[5px] text-[#f0a63c]">Plane</span>
          <span className="ml-6 flex"><MeshDataIcon className="size-3.5" color="#1fb8b4" /></span>
        </OutlinerRow>
        <OutlinerRow
          className="pl-[43px] text-[#737274]"
          toggles={<><CheckBox label="Include BackUp" /><Toggle label="Show BackUp" className="text-[#4a494b]"><EyeClosedIcon /></Toggle><Toggle label="Disable BackUp in renders" className="text-[#5c5b5d]"><CameraIcon /></Toggle></>}
        >
          <CollectionIcon className="size-3.5" /><span className="ml-[7px]">BackUp</span>
        </OutlinerRow>
      </ul>
    </section>
  );
}

/* ---------- properties ---------- */

const PROPERTY_TABS = [
  [{ label: "Tool", color: "text-[#b4b3b5]", icon: <ToolTabIcon /> }],
  [
    { label: "Render", color: "text-[#b4b3b5]", icon: <RenderTabIcon /> },
    { label: "Output", color: "text-[#b4b3b5]", icon: <OutputTabIcon /> },
    { label: "View Layer", color: "text-[#b4b3b5]", icon: <LayersIcon /> },
    { label: "Scene", color: "text-[#b4b3b5]", icon: <SceneIcon /> },
    { label: "World", color: "text-[#b85664]", icon: <WorldTabIcon /> },
  ],
  [{ label: "Collection", color: "text-[#dcdcdc]", icon: <CollectionTabIcon /> }],
  [
    { label: "Object", color: "text-[#a9a9a9]", icon: <ObjectIcon fill="#cf8748" /> },
    { label: "Modifiers", color: "text-[#6f9ff0]", icon: <WrenchTabIcon />, on: true },
    { label: "Particles", color: "text-[#5f76bd]", icon: <ParticlesTabIcon /> },
    { label: "Physics", color: "text-[#5b8ad2]", icon: <PhysicsTabIcon /> },
    { label: "Constraints", color: "text-[#6c8ad6]", icon: <ConstraintsTabIcon /> },
    { label: "Data", color: "text-[#21b27c]", icon: <MeshDataIcon color="#21b27c" /> },
    { label: "Material", color: "text-[#c05c6c]", icon: <MaterialTabIcon /> },
  ],
];

function Properties() {
  return (
    <section aria-label="Properties" className="flex min-h-0 flex-1 flex-col overflow-hidden rounded-md border border-[#39383a] bg-[#302f31]">
      <div className="flex h-[25px] shrink-0 items-start justify-between pt-0.5 pr-[7px] pl-[9px] text-[#e6e6e6]">
        <button className="flex h-[19px] w-[31px] items-center justify-center gap-1 rounded border border-[#3b3a3c] bg-[#2a292b]" aria-label="Editor type: Properties"><PropertiesIcon /><Chevron /></button>
        <SearchField id="properties-search" className="-ml-3 w-[118px]" />
        <button className="flex h-[19px] w-[19px] items-center justify-center rounded border border-[#3b3a3c] bg-[#2a292b]" aria-label="Options"><Chevron /></button>
      </div>
      <div className="flex min-h-0 flex-1">
        <div role="tablist" aria-label="Property tabs" className="flex w-[28px] shrink-0 flex-col gap-2.5 bg-[#1c1b1d] pt-[9px] pl-0.5">
          {PROPERTY_TABS.map((group, i) => (
            <div key={i} className="flex flex-col gap-0.5">
              {group.map((t) => (
                <button key={t.label} role="tab" aria-label={t.label} aria-selected={!!t.on} className={`flex h-[26px] items-center justify-center rounded-l [&>svg]:size-3.5 ${t.color} ${t.on ? "bg-[#302f31]" : ""}`}>
                  {t.icon}
                </button>
              ))}
            </div>
          ))}
        </div>
        <div className="min-w-0 flex-1 pt-2.5 pr-[7px] pl-2">
          <div className="flex h-4 items-center pr-0.5 pl-[3px] text-[#dcdcdc]">
            <ObjectIcon className="size-3.5" />
            <span className="ml-[9px]">Plane</span>
            <button aria-label="Pin" className="ml-auto text-[#8c8b8d]"><PinIcon className="size-3.5" /></button>
          </div>
          <button className="mt-[18px] flex h-[19px] w-full items-center rounded bg-[#545355] pr-3.5 pl-[5px] text-[#e6e6e6]">
            <PlusIcon />
            <span className="flex-1 pl-3.5 text-center">Add Modifier</span>
          </button>
        </div>
      </div>
    </section>
  );
}

/* ---------- window ---------- */

export default function App() {
  return (
    <div className="relative flex h-screen w-full flex-col overflow-hidden bg-[#19181a] font-['Inter',sans-serif] text-[11px] leading-4">
      <TopBar />
      <main className="flex min-h-0 flex-1 gap-1 pr-px">
        <div className="flex min-w-0 flex-1 flex-col gap-[3px]">
          <Viewport />
          <Timeline />
        </div>
        <aside className="flex w-[331px] shrink-0 flex-col gap-[3px]">
          <Outliner />
          <Properties />
        </aside>
      </main>
      <footer className="flex h-[21px] shrink-0 items-center justify-end pr-3 text-[#8c8b8d]">4.5.2</footer>
      <PerformanceOverlay />
    </div>
  );
}
